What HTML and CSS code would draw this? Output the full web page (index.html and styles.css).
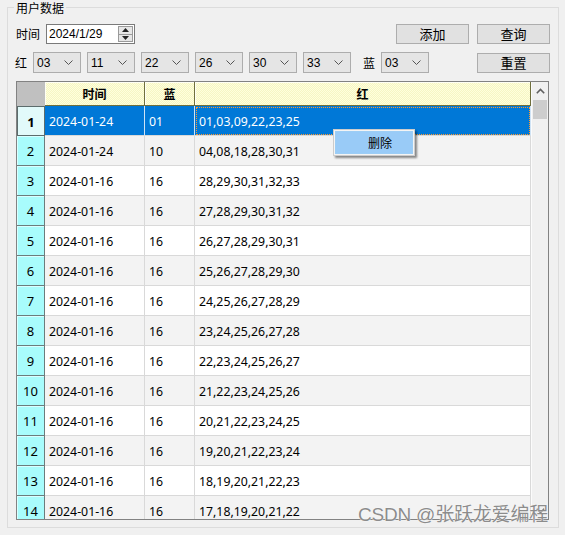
FILE: index.html
```html
<!DOCTYPE html>
<html lang="zh">
<head>
<meta charset="utf-8">
<title>用户数据</title>
<link rel="stylesheet" href="styles.css">
</head>
<body>
<fieldset class="group">
  <legend class="group-title">用户数据</legend>
  <div class="row row-top">
    <span class="label label-time">时间</span>
    <div class="date">
      <span class="date-text">2024/1/29</span>
      <span class="spin">
        <span class="spin-btn"><svg width="7" height="4" viewBox="0 0 7 4"><path d="M0 4L3.5 0L7 4Z" fill="#222"/></svg></span>
        <span class="spin-btn"><svg width="7" height="4" viewBox="0 0 7 4"><path d="M0 0L3.5 4L7 0Z" fill="#222"/></svg></span>
      </span>
    </div>
    <span class="spacer"></span>
    <button class="btn">添加</button>
    <button class="btn">查询</button>
  </div>
  <div class="row row-combo">
    <span class="label label-red">红</span>
    <div class="combos">
      <div class="combo"><span>03</span><svg class="chev" width="9" height="5" viewBox="0 0 9 5"><path d="M0.5 0.5L4.5 4.5L8.5 0.5" fill="none" stroke="#555"/></svg></div>
      <div class="combo"><span>11</span><svg class="chev" width="9" height="5" viewBox="0 0 9 5"><path d="M0.5 0.5L4.5 4.5L8.5 0.5" fill="none" stroke="#555"/></svg></div>
      <div class="combo"><span>22</span><svg class="chev" width="9" height="5" viewBox="0 0 9 5"><path d="M0.5 0.5L4.5 4.5L8.5 0.5" fill="none" stroke="#555"/></svg></div>
      <div class="combo"><span>26</span><svg class="chev" width="9" height="5" viewBox="0 0 9 5"><path d="M0.5 0.5L4.5 4.5L8.5 0.5" fill="none" stroke="#555"/></svg></div>
      <div class="combo"><span>30</span><svg class="chev" width="9" height="5" viewBox="0 0 9 5"><path d="M0.5 0.5L4.5 4.5L8.5 0.5" fill="none" stroke="#555"/></svg></div>
      <div class="combo"><span>33</span><svg class="chev" width="9" height="5" viewBox="0 0 9 5"><path d="M0.5 0.5L4.5 4.5L8.5 0.5" fill="none" stroke="#555"/></svg></div>
    </div>
    <span class="label label-blue">蓝</span>
    <div class="combo"><span>03</span><svg class="chev" width="9" height="5" viewBox="0 0 9 5"><path d="M0.5 0.5L4.5 4.5L8.5 0.5" fill="none" stroke="#555"/></svg></div>
    <span class="spacer"></span>
    <button class="btn">重置</button>
  </div>

  <div class="table">
    <div class="grid">
      <div class="trow head">
        <div class="corner"></div>
        <div class="hcell">时间</div>
        <div class="hcell">蓝</div>
        <div class="hcell">红</div>
      </div>
      <div class="trow selected"><div class="rh">1</div><div class="cell">2024-01-24</div><div class="cell">01</div><div class="cell focus">01,03,09,22,23,25</div></div>
      <div class="trow alt"><div class="rh">2</div><div class="cell">2024-01-24</div><div class="cell">10</div><div class="cell">04,08,18,28,30,31</div></div>
      <div class="trow"><div class="rh">3</div><div class="cell">2024-01-16</div><div class="cell">16</div><div class="cell">28,29,30,31,32,33</div></div>
      <div class="trow alt"><div class="rh">4</div><div class="cell">2024-01-16</div><div class="cell">16</div><div class="cell">27,28,29,30,31,32</div></div>
      <div class="trow"><div class="rh">5</div><div class="cell">2024-01-16</div><div class="cell">16</div><div class="cell">26,27,28,29,30,31</div></div>
      <div class="trow alt"><div class="rh">6</div><div class="cell">2024-01-16</div><div class="cell">16</div><div class="cell">25,26,27,28,29,30</div></div>
      <div class="trow"><div class="rh">7</div><div class="cell">2024-01-16</div><div class="cell">16</div><div class="cell">24,25,26,27,28,29</div></div>
      <div class="trow alt"><div class="rh">8</div><div class="cell">2024-01-16</div><div class="cell">16</div><div class="cell">23,24,25,26,27,28</div></div>
      <div class="trow"><div class="rh">9</div><div class="cell">2024-01-16</div><div class="cell">16</div><div class="cell">22,23,24,25,26,27</div></div>
      <div class="trow alt"><div class="rh">10</div><div class="cell">2024-01-16</div><div class="cell">16</div><div class="cell">21,22,23,24,25,26</div></div>
      <div class="trow"><div class="rh">11</div><div class="cell">2024-01-16</div><div class="cell">16</div><div class="cell">20,21,22,23,24,25</div></div>
      <div class="trow alt"><div class="rh">12</div><div class="cell">2024-01-16</div><div class="cell">16</div><div class="cell">19,20,21,22,23,24</div></div>
      <div class="trow"><div class="rh">13</div><div class="cell">2024-01-16</div><div class="cell">16</div><div class="cell">18,19,20,21,22,23</div></div>
      <div class="trow alt"><div class="rh">14</div><div class="cell">2024-01-16</div><div class="cell">16</div><div class="cell">17,18,19,20,21,22</div></div>
    </div>
    <div class="vscroll">
      <div class="arrow"><svg width="9" height="6" viewBox="0 0 9 6"><path d="M0.8 5.2L4.5 1.5L8.2 5.2" fill="none" stroke="#606060" stroke-width="1.6"/></svg></div>
      <div class="thumb"></div>
      <div class="track"></div>
      <div class="arrow"><svg width="9" height="6" viewBox="0 0 9 6"><path d="M0.8 0.8L4.5 4.5L8.2 0.8" fill="none" stroke="#606060" stroke-width="1.6"/></svg></div>
    </div>
  </div>
</fieldset>

<div class="menu">
  <div class="menu-item">删除</div>
</div>

<div class="watermark">CSDN @张跃龙爱编程</div>
</body>
</html>
```

FILE: styles.css
```css
* { box-sizing: border-box; }

html, body {
  margin: 0;
  padding: 0;
  background: #f0f0f0;
  width: 565px;
  height: 535px;
  overflow: hidden;
}

body {
  position: relative;
  font-family: "Noto Sans", "Noto Sans CJK SC", sans-serif;
  font-size: 12px;
  color: #000;
}

.group {
  margin: 0 0 0 7px;
  width: 552px;
  height: 528px;
  border: 1px solid #dcdcdc;
  padding: 0 8px;
  min-width: 0;
}

.group-title {
  font-family: "Noto Sans CJK SC", sans-serif;
  font-size: 12px;
  line-height: 15px;
  padding: 0 2px;
  margin-left: -2px;
}

.row {
  display: flex;
  align-items: center;
}

.row-top {
  margin-top: 9px;
  height: 20px;
}

.row-combo {
  margin-top: 8px;
  height: 21px;
}

.label {
  font-family: "Noto Sans CJK SC", sans-serif;
  font-size: 12px;
  line-height: 16px;
}

.label-time { width: 30px; }
.label-red { width: 18px; margin-left: -1px; padding-top: 1px; }
.label-blue { width: 18px; margin-left: 12px; padding-top: 1px; }

.spacer { flex: 1; }

.date {
  width: 89px;
  height: 20px;
  background: #fff;
  border: 1px solid #7a7a7a;
  display: flex;
  align-items: center;
  justify-content: space-between;
  padding: 0 1px 0 2px;
}

.date-text {
  font-family: "Liberation Sans", sans-serif;
  font-size: 12px;
}

.spin {
  width: 15px;
  height: 16px;
  display: flex;
  flex-direction: column;
  border: 1px solid #9a9a9a;
  background: #e6e6e6;
}

.spin-btn {
  flex: 1;
  display: flex;
  align-items: center;
  justify-content: center;
}

.spin-btn + .spin-btn { border-top: 1px solid #9a9a9a; }

.btn {
  width: 73px;
  height: 20px;
  margin: 0;
  padding: 0;
  background: #e1e1e1;
  border: 1px solid #adadad;
  font-family: "Noto Sans CJK SC", sans-serif;
  font-size: 13px;
  line-height: 16px;
  color: #000;
}

.btn + .btn { margin-left: 8px; }

.combos {
  display: flex;
  gap: 6px;
}

.combo {
  width: 48px;
  height: 21px;
  background: #e5e5e5;
  border: 1px solid #adadad;
  display: flex;
  align-items: center;
  justify-content: space-between;
  padding: 0 7px 0 3px;
  font-family: "Liberation Sans", sans-serif;
  font-size: 12px;
}

.table {
  margin-top: 8px;
  margin-left: 0;
  width: 533px;
  height: 439px;
  border: 1px solid #828282;
  display: flex;
  background: #fff;
}

.grid {
  width: 514px;
  height: 437px;
  overflow: hidden;
  background: #fff;
}

.trow {
  display: grid;
  grid-template-columns: 28px 100px 50px 336px;
  height: 30px;
}

.trow.alt { background: #f3f3f3; }

.trow.head { height: 24px; }

.corner {
  background: #c0c0c0;
}

.hcell {
  background: repeating-conic-gradient(#ffffdc 0 25%, #f6f6c4 0 50%) 0 0 / 2px 2px;
  border-right: 1px solid #6f6f3d;
  border-bottom: 1px solid #6f6f3d;
  box-shadow: inset 1px 1px 0 #fffff4;
  display: flex;
  align-items: center;
  justify-content: center;
  font-family: "Noto Sans CJK SC", sans-serif;
  font-weight: bold;
  font-size: 12px;
}

.rh {
  background: #a8fcfc;
  border-right: 1px solid #6c7c7c;
  border-bottom: 1px solid #6c7c7c;
  box-shadow: inset 1px 1px 0 #d8ffff;
  display: flex;
  align-items: center;
  justify-content: center;
  font-size: 13px;
  padding-top: 1px;
}

.cell {
  border-right: 1px solid #d9d9d9;
  border-bottom: 1px solid #d9d9d9;
  display: flex;
  align-items: center;
  padding-left: 4px;
  padding-top: 1px;
  font-size: 12.3px;
  white-space: nowrap;
}

.selected .cell {
  background: #0078d7;
  color: #fff;
  border-right-color: #cfe3f5;
}

.selected .rh {
  background: #e2fafa;
  border: 1px solid #5c6c6c;
  box-shadow: none;
  font-weight: bold;
}

.cell.focus {
  outline: 1px dotted #ff9a2e;
  outline-offset: -2px;
}

.vscroll {
  width: 17px;
  height: 437px;
  background: #f0f0f0;
  border-left: 1px solid #fbfbfb;
  display: flex;
  flex-direction: column;
}

.arrow {
  height: 17px;
  display: flex;
  align-items: center;
  justify-content: center;
}

.thumb {
  margin: 1px 1px 0 1px;
  height: 19px;
  background: #cdcdcd;
}

.track { flex: 1; }

.menu {
  position: absolute;
  left: 333px;
  top: 129px;
  padding: 1px;
  background: #f4f4f4;
  border: 1px solid #cccccc;
  box-shadow: 2px 2px 2px rgba(0, 0, 0, 0.45);
}

.menu-item {
  width: 78px;
  height: 23px;
  background: #99cbf7;
  border: 1px solid #9ccdf5;
  padding-left: 32px;
  font-family: "Noto Sans CJK SC", sans-serif;
  font-size: 12px;
  line-height: 21px;
}

.watermark {
  position: absolute;
  left: 358px;
  top: 503px;
  font-family: "Liberation Sans", "Noto Sans CJK SC", sans-serif;
  font-size: 19px;
  line-height: 24px;
  color: #8c8c8c;
  text-shadow: 0 0 1px #fff, 0 0 1px #fff;
  white-space: nowrap;
  letter-spacing: -0.2px;
}
```
